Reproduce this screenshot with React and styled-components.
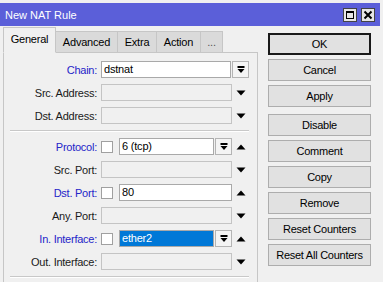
import styled, { createGlobalStyle } from 'styled-components';

const GlobalStyle = createGlobalStyle`
  html, body {
    margin: 0;
    padding: 0;
    background: #f0f0f0;
    overflow: hidden;
  }
  body {
    font-family: 'Liberation Sans', Arial, sans-serif;
    font-size: 11px;
    color: #000;
  }
`;

const Window = styled.div`
  width: 383px;
  height: 282px;
  padding-top: 3px;
  box-sizing: border-box;
`;

const TitleBar = styled.div`
  height: 23px;
  margin-right: 3px;
  background: #5b5fd9;
  display: flex;
  align-items: center;
  justify-content: space-between;
  padding: 0 5px;
`;

const Title = styled.span`
  color: #fff;
  font-size: 11px;
`;

const TitleButtons = styled.div`
  display: flex;
  gap: 4px;
`;

const TitleButton = styled.div`
  width: 14px;
  height: 14px;
  box-sizing: border-box;
  border: 1px solid #444;
  background: #e6e6e6;
  display: flex;
  align-items: center;
  justify-content: center;
`;

const Body = styled.div`
  display: flex;
`;

const LeftColumn = styled.div`
  margin-left: 3px;
  width: 255px;
`;

const TabBar = styled.div`
  display: flex;
  align-items: flex-end;
  height: 27px;
  position: relative;
  z-index: 1;
  margin-bottom: -1px;
`;

const Tab = styled.div`
  width: ${(p) => p.$w}px;
  height: ${(p) => (p.$active ? 26 : 22)}px;
  box-sizing: border-box;
  border: 1px solid #c6c6c6;
  border-left: ${(p) => (p.$first ? '1px solid #c6c6c6' : 'none')};
  border-bottom: ${(p) => (p.$active ? '1px solid #f0f0f0' : '1px solid #c6c6c6')};
  background: ${(p) => (p.$active ? '#f0f0f0' : '#dadada')};
  display: flex;
  align-items: center;
  justify-content: center;
  padding-bottom: ${(p) => (p.$active ? 3 : 1)}px;
  letter-spacing: -0.2px;
  color: ${(p) => (p.$muted ? '#555' : '#000')};
`;

const Panel = styled.div`
  border: 1px solid #c6c6c6;
  border-bottom: none;
  background: #f0f0f0;
  height: 240px;
  padding-top: 8px;
  box-sizing: border-box;
`;

const Row = styled.div`
  display: flex;
  align-items: center;
  height: 17px;
  margin-bottom: 6px;
`;

const Label = styled.div`
  width: 94px;
  padding-right: 1px;
  box-sizing: border-box;
  text-align: right;
  letter-spacing: -0.25px;
  color: ${(p) => (p.$blue ? '#2424c8' : '#1a1a1a')};
  margin-right: 3px;
  white-space: nowrap;
`;

const Field = styled.div`
  width: 148px;
  display: flex;
  align-items: center;
  height: 17px;
`;

const Input = styled.div`
  flex: 1;
  height: 17px;
  box-sizing: border-box;
  border: 1px solid ${(p) => (p.$empty ? '#c4c4c4' : '#a9a9a9')};
  background: ${(p) => (p.$selected ? '#0078d7' : p.$empty ? '#f0f0f0' : '#fff')};
  color: ${(p) => (p.$selected ? '#fff' : '#000')};
  padding-left: 2px;
  line-height: 15px;
  letter-spacing: -0.2px;
  overflow: hidden;
  white-space: nowrap;
`;

const Check = styled.div`
  width: 12px;
  height: 12px;
  box-sizing: border-box;
  border: 1px solid #a0a0a0;
  background: #fff;
  margin-right: 6px;
  flex: none;
`;

const DropButton = styled.div`
  width: 17px;
  height: 17px;
  box-sizing: border-box;
  border: 1px solid #b4b4b4;
  background: #f4f4f4;
  margin-left: 1px;
  display: flex;
  align-items: center;
  justify-content: center;
  flex: none;
`;

const ArrowCell = styled.div`
  width: 16px;
  margin-left: 1px;
  display: flex;
  align-items: center;
  justify-content: center;
  flex: none;
`;

const Separator = styled.div`
  height: 1px;
  background: #c8c8c8;
  border-bottom: 1px solid #fff;
  margin: 0 8px 6px 6px;
`;

const RightColumn = styled.div`
  margin-left: 10px;
  width: 103px;
  padding-top: 7px;
  display: flex;
  flex-direction: column;
`;

const Button = styled.div`
  height: 22px;
  box-sizing: border-box;
  border: ${(p) => (p.$default ? '2px solid #1a1a1a' : '1px solid #adadad')};
  background: #e1e1e1;
  display: flex;
  align-items: center;
  justify-content: center;
  letter-spacing: -0.25px;
  margin-bottom: 4px;
  margin-top: ${(p) => (p.$spaced ? 3 : 0)}px;
  white-space: nowrap;
`;

const DropIcon = () => (
  <svg width="8" height="8" viewBox="0 0 8 8">
    <rect x="0.5" y="0" width="7" height="2" fill="#000" />
    <polygon points="0.5,3 7.5,3 4,7" fill="#000" />
  </svg>
);

const Arrow = ({ up }) => (
  <svg width="10" height="6" viewBox="0 0 10 6">
    {up ? (
      <polygon points="0.5,5.5 9.5,5.5 5,0.5" fill="#000" />
    ) : (
      <polygon points="0.5,0.5 9.5,0.5 5,5.5" fill="#000" />
    )}
  </svg>
);

const MaxIcon = () => (
  <svg width="10" height="10" viewBox="0 0 10 10">
    <rect x="1.5" y="1.5" width="7" height="7" fill="none" stroke="#000" strokeWidth="1" />
    <rect x="1" y="1" width="8" height="2" fill="#000" />
  </svg>
);

const CloseIcon = () => (
  <svg width="10" height="10" viewBox="0 0 10 10">
    <path d="M1.5 1.5 L8.5 8.5 M8.5 1.5 L1.5 8.5" stroke="#000" strokeWidth="2" />
  </svg>
);

const tabs = [
  { name: 'General', w: 53, active: true },
  { name: 'Advanced', w: 62 },
  { name: 'Extra', w: 39 },
  { name: 'Action', w: 44 },
  { name: '...', w: 22, muted: true },
];

const buttons = [
  { name: 'OK', def: true },
  { name: 'Cancel' },
  { name: 'Apply' },
  { name: 'Disable', spaced: true },
  { name: 'Comment' },
  { name: 'Copy' },
  { name: 'Remove' },
  { name: 'Reset Counters' },
  { name: 'Reset All Counters' },
];

const App = () => (
  <>
    <GlobalStyle />
    <Window>
      <TitleBar>
        <Title>New NAT Rule</Title>
        <TitleButtons>
          <TitleButton>
            <MaxIcon />
          </TitleButton>
          <TitleButton>
            <CloseIcon />
          </TitleButton>
        </TitleButtons>
      </TitleBar>
      <Body>
        <LeftColumn>
          <TabBar>
            {tabs.map((t, i) => (
              <Tab key={t.name} $w={t.w} $active={t.active} $first={i === 0} $muted={t.muted}>
                {t.name}
              </Tab>
            ))}
          </TabBar>
          <Panel>
            <Row>
              <Label $blue>Chain:</Label>
              <Field>
                <Input>dstnat</Input>
                <DropButton>
                  <DropIcon />
                </DropButton>
              </Field>
            </Row>
            <Row>
              <Label>Src. Address:</Label>
              <Field>
                <Input $empty />
                <ArrowCell>
                  <Arrow />
                </ArrowCell>
              </Field>
            </Row>
            <Row>
              <Label>Dst. Address:</Label>
              <Field>
                <Input $empty />
                <ArrowCell>
                  <Arrow />
                </ArrowCell>
              </Field>
            </Row>
            <Separator />
            <Row>
              <Label $blue>Protocol:</Label>
              <Field>
                <Check />
                <Input>6 (tcp)</Input>
                <DropButton>
                  <DropIcon />
                </DropButton>
                <ArrowCell>
                  <Arrow up />
                </ArrowCell>
              </Field>
            </Row>
            <Row>
              <Label>Src. Port:</Label>
              <Field>
                <Input $empty />
                <ArrowCell>
                  <Arrow />
                </ArrowCell>
              </Field>
            </Row>
            <Row>
              <Label $blue>Dst. Port:</Label>
              <Field>
                <Check />
                <Input>80</Input>
                <ArrowCell>
                  <Arrow up />
                </ArrowCell>
              </Field>
            </Row>
            <Row>
              <Label>Any. Port:</Label>
              <Field>
                <Input $empty />
                <ArrowCell>
                  <Arrow />
                </ArrowCell>
              </Field>
            </Row>
            <Row>
              <Label $blue>In. Interface:</Label>
              <Field>
                <Check />
                <Input $selected>ether2</Input>
                <DropButton>
                  <DropIcon />
                </DropButton>
                <ArrowCell>
                  <Arrow up />
                </ArrowCell>
              </Field>
            </Row>
            <Row>
              <Label>Out. Interface:</Label>
              <Field>
                <Input $empty />
                <ArrowCell>
                  <Arrow />
                </ArrowCell>
              </Field>
            </Row>
            <Separator />
          </Panel>
        </LeftColumn>
        <RightColumn>
          {buttons.map((b) => (
            <Button key={b.name} $default={b.def} $spaced={b.spaced}>
              {b.name}
            </Button>
          ))}
        </RightColumn>
      </Body>
    </Window>
  </>
);

export default App;
